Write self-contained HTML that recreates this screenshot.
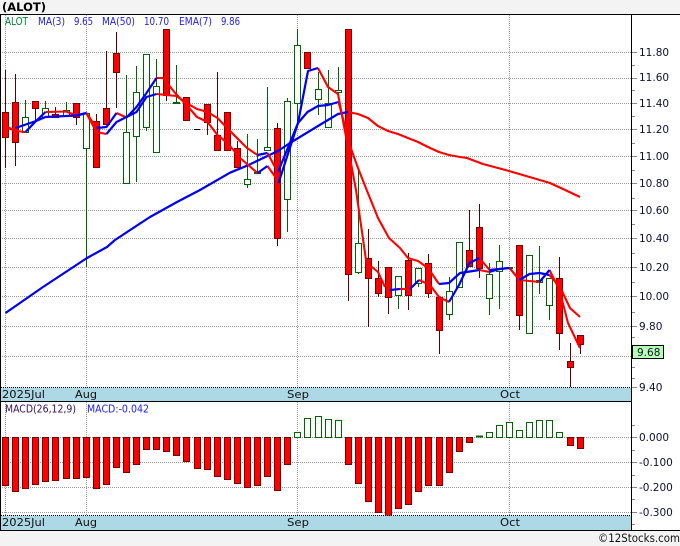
<!DOCTYPE html>
<html><head><meta charset="utf-8"><title>ALOT</title>
<style>
html,body{margin:0;padding:0;background:#f3f3f3;width:680px;height:546px;overflow:hidden}
svg{display:block}
text{font-family:"DejaVu Sans","Liberation Sans",sans-serif}
</style></head><body>
<svg width="680" height="546" viewBox="0 0 680 546" xmlns="http://www.w3.org/2000/svg">
<rect width="680" height="546" fill="#f3f3f3"/>
<rect x="0" y="14" width="680" height="516" fill="#fff"/>
<text x="2" y="11" font-size="11.5" font-weight="bold" fill="#000">(ALOT)</text>

<!-- grid -->
<g stroke="#999" stroke-width="1" stroke-dasharray="1 1" fill="none">
<path d="M2 52.5H632M2 78.5H632M2 103.5H632M2 129.5H632M2 156.5H632M2 183.5H632M2 210.5H632M2 238.5H632M2 267.5H632M2 296.5H632M2 326.5H632M2 356.5H632"/>
<path d="M2 437.5H632M2 462.5H632M2 487.5H632M2 512.5H632"/>
<path d="M5.5 15V388M86.5 15V388M297.5 15V388M509.5 15V388M5.5 402V515M86.5 402V515M297.5 402V515M509.5 402V515"/>
</g>

<!-- wicks -->
<path fill="none" stroke="#5c0000" stroke-width="1" d="M5.5 70V168M15.5 74V166M35.5 108V122M55.5 107V117M76.5 117V125M96.5 114V121M106.5 51V108M116.5 32V108M166.5 95V101M207.5 122V135M217.5 72V135M237.5 141V148M277.5 123V128M277.5 238V246M348.5 274V301M368.5 229V327M378.5 261V297M388.5 297V314M408.5 253V310M428.5 254V298M439.5 330V354M469.5 210V250M479.5 204V278M519.5 315V330M559.5 257V350M570.5 343V387M580.5 344V354"/>
<path fill="none" stroke="#006400" stroke-width="1" d="M25.5 100V133M45.5 101V117M66.5 102V115M86.5 148V267M126.5 75V132M136.5 66V182M146.5 127V131M156.5 59V86M176.5 65V103M247.5 134V188M257.5 139V173M267.5 87V147M287.5 98V101M287.5 199V232M297.5 29V45M297.5 103V123M318.5 72V115M328.5 70V103M338.5 67V100M358.5 168V274M398.5 295V309M418.5 283V287M449.5 277V320M489.5 263V315M499.5 245V309M539.5 246V294M549.5 305V320"/>

<!-- bodies -->
<path fill="#fff" stroke="#006400" stroke-width="1" d="M22.5 117.5h6v15h-6zM42.5 108.5h6v9h-6zM63.5 110.5h6v5h-6zM83.5 113.5h6v35h-6zM123.5 132.5h6v51h-6zM133.5 92.5h6v44h-6zM143.5 54.5h6v73h-6zM153.5 86.5h6v66h-6zM173.5 102.5h6v1h-6zM244.5 179.5h6v5h-6zM254.5 172.5h6v1h-6zM264.5 147.5h6v3h-6zM284.5 101.5h6v98h-6zM294.5 45.5h6v58h-6zM315.5 89.5h6v10h-6zM325.5 103.5h6v24h-6zM335.5 90.5h6v2h-6zM355.5 243.5h6v29h-6zM395.5 276.5h6v19h-6zM415.5 268.5h6v15h-6zM446.5 291.5h6v23h-6zM456.5 242.5h6v45h-6zM486.5 274.5h6v24h-6zM496.5 261.5h6v10h-6zM506.5 267.5h6v1h-6zM526.5 255.5h6v78h-6zM536.5 280.5h6v2h-6zM546.5 278.5h6v27h-6z"/>
<path fill="#f00" stroke="#7a0000" stroke-width="1" d="M2.5 112.5h6v25h-6zM12.5 102.5h6v40h-6zM32.5 101.5h6v7h-6zM52.5 114.5h6v3h-6zM73.5 103.5h6v14h-6zM93.5 121.5h6v46h-6zM103.5 108.5h6v16h-6zM113.5 53.5h6v19h-6zM163.5 29.5h6v66h-6zM183.5 97.5h6v23h-6zM204.5 104.5h6v18h-6zM214.5 135.5h6v15h-6zM224.5 112.5h6v38h-6zM234.5 148.5h6v19h-6zM274.5 128.5h6v110h-6zM304.5 52.5h6v16h-6zM345.5 29.5h6v245h-6zM365.5 258.5h6v20h-6zM375.5 278.5h6v15h-6zM385.5 267.5h6v30h-6zM405.5 260.5h6v35h-6zM425.5 263.5h6v30h-6zM436.5 297.5h6v33h-6zM466.5 250.5h6v16h-6zM476.5 227.5h6v41h-6zM516.5 245.5h6v70h-6zM556.5 278.5h6v55h-6zM567.5 361.5h6v6h-6zM577.5 335.5h6v9h-6z"/>
<path stroke="#000" stroke-width="1" d="M194 129.5H200"/>

<!-- MA50 -->
<path fill="none" stroke="#0000f0" stroke-width="2.2" stroke-linejoin="round" d="M5.5 313L43 287L87 258L107 247L115 240L150 217L177 202L200 190L230 172.7L247 165.7L278 151L290 143L318 126L338 114L348 112"/>
<path fill="none" stroke="#f00" stroke-width="2.1" stroke-linejoin="round" d="M348 112L358 114L368 118L378 126L388 131L398 134L418 142L428 147L439 152L449 155L460 157L467 158L483 164L509 171L533 178L550 183L563 189L580 197"/>

<!-- EMA7 and MA3 : red segments -->
<path fill="none" stroke="#f00" stroke-width="2.1" stroke-linejoin="round" d="M5.5 128L15.5 130M86.5 113.5L96.5 132L106.5 134M156.5 94L176.5 96L186.5 103L197 109L207.5 112L217.5 118L230 131L247 148L257.5 155M267.5 153L275 167M338.5 102L351.5 150L358 168L366.7 190L378 218L389 238L400 248L408 258L418 261L428 268L439 284M479.5 270L489.5 272M509.5 268L519.5 280M549.5 275L560 287L570 308L580 317"/>
<path fill="none" stroke="#f00" stroke-width="2.1" stroke-linejoin="round" d="M5.5 126L15.5 131L25.5 132M45.5 112L66 111.5L76.5 115.5M86.5 113L96.5 128M116.5 113L126.5 117.5M156.5 78L163 78L176 94L186.5 105L197 117L207.5 122L217.5 135L227.5 143L240 158L257.5 173M267.5 166L277.5 180M318 68L328 87L338 94L356 190L367 267L372 267L378 272L385 287M400 289L410 289M419 280L430 285L439 297L449 302M479.5 258L489.5 270M509.5 268L519.5 280L539.5 282M549.5 270L559.5 290L568 323L580 348"/>
<!-- blue segments -->
<path fill="none" stroke="#0000f0" stroke-width="2.2" stroke-linejoin="round" d="M15.5 128L36 121L45.5 117L76.5 115.5L86.5 113M106.5 134L116.5 122L136.5 112L146.5 97L156.5 94M257.5 155L267.5 153M278 172L298 123L307.5 112L318 106L328 105L338.5 102M439 284L449 283L460 273L479.5 270M489.5 272L499.5 269L509.5 268M519.5 280L529.5 274L539.5 273L549.5 275"/>
<path fill="none" stroke="#0000f0" stroke-width="2.2" stroke-linejoin="round" d="M25.5 132L36 121L45.5 112M76.5 115.5L86.5 113M96.5 128L106.5 127L116.5 113M126.5 117.5L136.5 107L146.5 93L156.5 78M257.5 173L267.5 166M278.5 183L298 123L308 71L318 68M390 290L400 289M410 289L419 280M449 302L459 285L469.5 263L479.5 258M489.5 270L499.5 269L509.5 268M539.5 282L549.5 270"/>

<!-- legend -->
<g font-size="10.5">
<text x="5" y="25" fill="#008040" textLength="23" lengthAdjust="spacingAndGlyphs">ALOT</text>
<g fill="#2020f0">
<text x="38" y="25" textLength="27" lengthAdjust="spacingAndGlyphs">MA(3)</text><text x="74" y="25" textLength="19" lengthAdjust="spacingAndGlyphs">9.65</text>
<text x="102" y="25" textLength="33" lengthAdjust="spacingAndGlyphs">MA(50)</text><text x="144" y="25" textLength="25" lengthAdjust="spacingAndGlyphs">10.70</text>
<text x="179" y="25" textLength="33" lengthAdjust="spacingAndGlyphs">EMA(7)</text><text x="221" y="25" textLength="19" lengthAdjust="spacingAndGlyphs">9.86</text>
</g>
</g>

<!-- date band 1 -->
<rect x="1" y="387.5" width="630" height="13.5" fill="#add8e6"/>
<path d="M1 387.5H631" stroke="#000" stroke-width="1" stroke-dasharray="1 1"/>
<path d="M0 401.5H632" stroke="#000" stroke-width="1"/>
<g font-size="11" fill="#111">
<text x="2" y="398" textLength="43" lengthAdjust="spacingAndGlyphs">2025Jul</text><text x="75" y="398" textLength="22" lengthAdjust="spacingAndGlyphs">Aug</text><text x="287" y="398" textLength="22" lengthAdjust="spacingAndGlyphs">Sep</text><text x="500" y="398" textLength="20" lengthAdjust="spacingAndGlyphs">Oct</text>
</g>

<!-- MACD -->
<text x="5" y="412.5" font-size="10.5" fill="#301060" textLength="71" lengthAdjust="spacingAndGlyphs">MACD(26,12,9)</text>
<text x="87" y="412.5" font-size="10.5" fill="#2020f0" textLength="62" lengthAdjust="spacingAndGlyphs">MACD:-0.042</text>
<path fill="#fff" stroke="#006400" stroke-width="1" d="M294.5 432.5h6v5h-6zM304.5 418.5h6v19h-6zM315.5 416.5h6v21h-6zM325.5 419.5h6v18h-6zM335.5 420.5h6v17h-6zM486.5 432.5h6v5h-6zM496.5 425.5h6v12h-6zM506.5 422.5h6v15h-6zM516.5 430.5h6v7h-6zM526.5 422.5h6v15h-6zM536.5 420.5h6v17h-6zM546.5 420.5h6v17h-6zM556.5 432.5h6v5h-6z"/>
<path stroke="#006400" stroke-width="2" d="M476 436.5h7"/>
<path fill="#f00" stroke="#7a0000" stroke-width="1" d="M2.5 437.5h6v48h-6zM12.5 437.5h6v54h-6zM22.5 437.5h6v51h-6zM32.5 437.5h6v47h-6zM42.5 437.5h6v44h-6zM52.5 437.5h6v43h-6zM63.5 437.5h6v41h-6zM73.5 437.5h6v41h-6zM83.5 437.5h6v40h-6zM93.5 437.5h6v51h-6zM103.5 437.5h6v47h-6zM113.5 437.5h6v30h-6zM123.5 437.5h6v35h-6zM133.5 437.5h6v27h-6zM143.5 437.5h6v12h-6zM153.5 437.5h6v12h-6zM163.5 437.5h6v14h-6zM173.5 437.5h6v18h-6zM183.5 437.5h6v24h-6zM194.5 437.5h6v31h-6zM204.5 437.5h6v32h-6zM214.5 437.5h6v39h-6zM224.5 437.5h6v42h-6zM234.5 437.5h6v46h-6zM244.5 437.5h6v50h-6zM254.5 437.5h6v48h-6zM264.5 437.5h6v39h-6zM274.5 437.5h6v53h-6zM284.5 437.5h6v27h-6zM345.5 437.5h6v27h-6zM355.5 437.5h6v46h-6zM365.5 437.5h6v64h-6zM375.5 437.5h6v75h-6zM385.5 437.5h6v78h-6zM395.5 437.5h6v71h-6zM405.5 437.5h6v67h-6zM415.5 437.5h6v54h-6zM425.5 437.5h6v48h-6zM436.5 437.5h6v48h-6zM446.5 437.5h6v35h-6zM456.5 437.5h6v14h-6zM466.5 437.5h6v5h-6zM567.5 437.5h6v8h-6zM577.5 437.5h6v11h-6z"/>

<!-- date band 2 -->
<rect x="1" y="515.5" width="630" height="14.5" fill="#add8e6"/>
<path d="M1 515.5H631" stroke="#000" stroke-width="1" stroke-dasharray="1 1"/>
<g font-size="11" fill="#111">
<text x="2" y="526" textLength="43" lengthAdjust="spacingAndGlyphs">2025Jul</text><text x="75" y="526" textLength="22" lengthAdjust="spacingAndGlyphs">Aug</text><text x="287" y="526" textLength="22" lengthAdjust="spacingAndGlyphs">Sep</text><text x="500" y="526" textLength="20" lengthAdjust="spacingAndGlyphs">Oct</text>
</g>

<!-- frame -->
<path d="M0 14.5H680M0 530.5H680" stroke="#000" stroke-width="1"/>
<path d="M0.5 14V531M631.5 14V531" stroke="#000" stroke-width="1"/>

<!-- ticks -->
<path stroke="#888" stroke-width="1" d="M632 52.5h5M632 65.5h3M632 78.5h5M632 90.5h3M632 103.5h5M632 116.5h3M632 129.5h5M632 143.5h3M632 156.5h5M632 170.5h3M632 183.5h5M632 198.5h3M632 210.5h5M632 224.5h3M632 238.5h5M632 253.5h3M632 267.5h5M632 282.5h3M632 296.5h5M632 312.5h3M632 326.5h5M632 337.5h3M632 367.5h3M632 378.5h3M632 387.5h5M632 425.5h3M632 437.5h5M632 450.5h3M632 462.5h5M632 475.5h3M632 487.5h5M632 499.5h3M632 512.5h5M632 524.5h3"/>

<!-- axis labels -->
<g font-size="10.5" fill="#101030">
<text x="639" y="56">11.80</text><text x="639" y="81">11.60</text><text x="639" y="107">11.40</text><text x="639" y="133">11.20</text><text x="639" y="160">11.00</text><text x="639" y="187">10.80</text><text x="639" y="214">10.60</text><text x="639" y="242">10.40</text><text x="639" y="271">10.20</text><text x="639" y="300">10.00</text><text x="639" y="330">9.80</text><text x="639" y="391">9.40</text>
<text x="639" y="441">0.000</text><text x="639" y="466">-0.100</text><text x="639" y="491">-0.200</text><text x="639" y="516">-0.300</text>
</g>
<rect x="632.5" y="345.5" width="31" height="13" fill="#b4ffb4" stroke="#000" stroke-width="1"/>
<text x="637" y="356" font-size="10.5" fill="#101030">9.68</text>

<text x="598" y="542" font-size="11.5" fill="#111" textLength="82" lengthAdjust="spacingAndGlyphs">©12Stocks.com</text>
</svg>
</body></html>
